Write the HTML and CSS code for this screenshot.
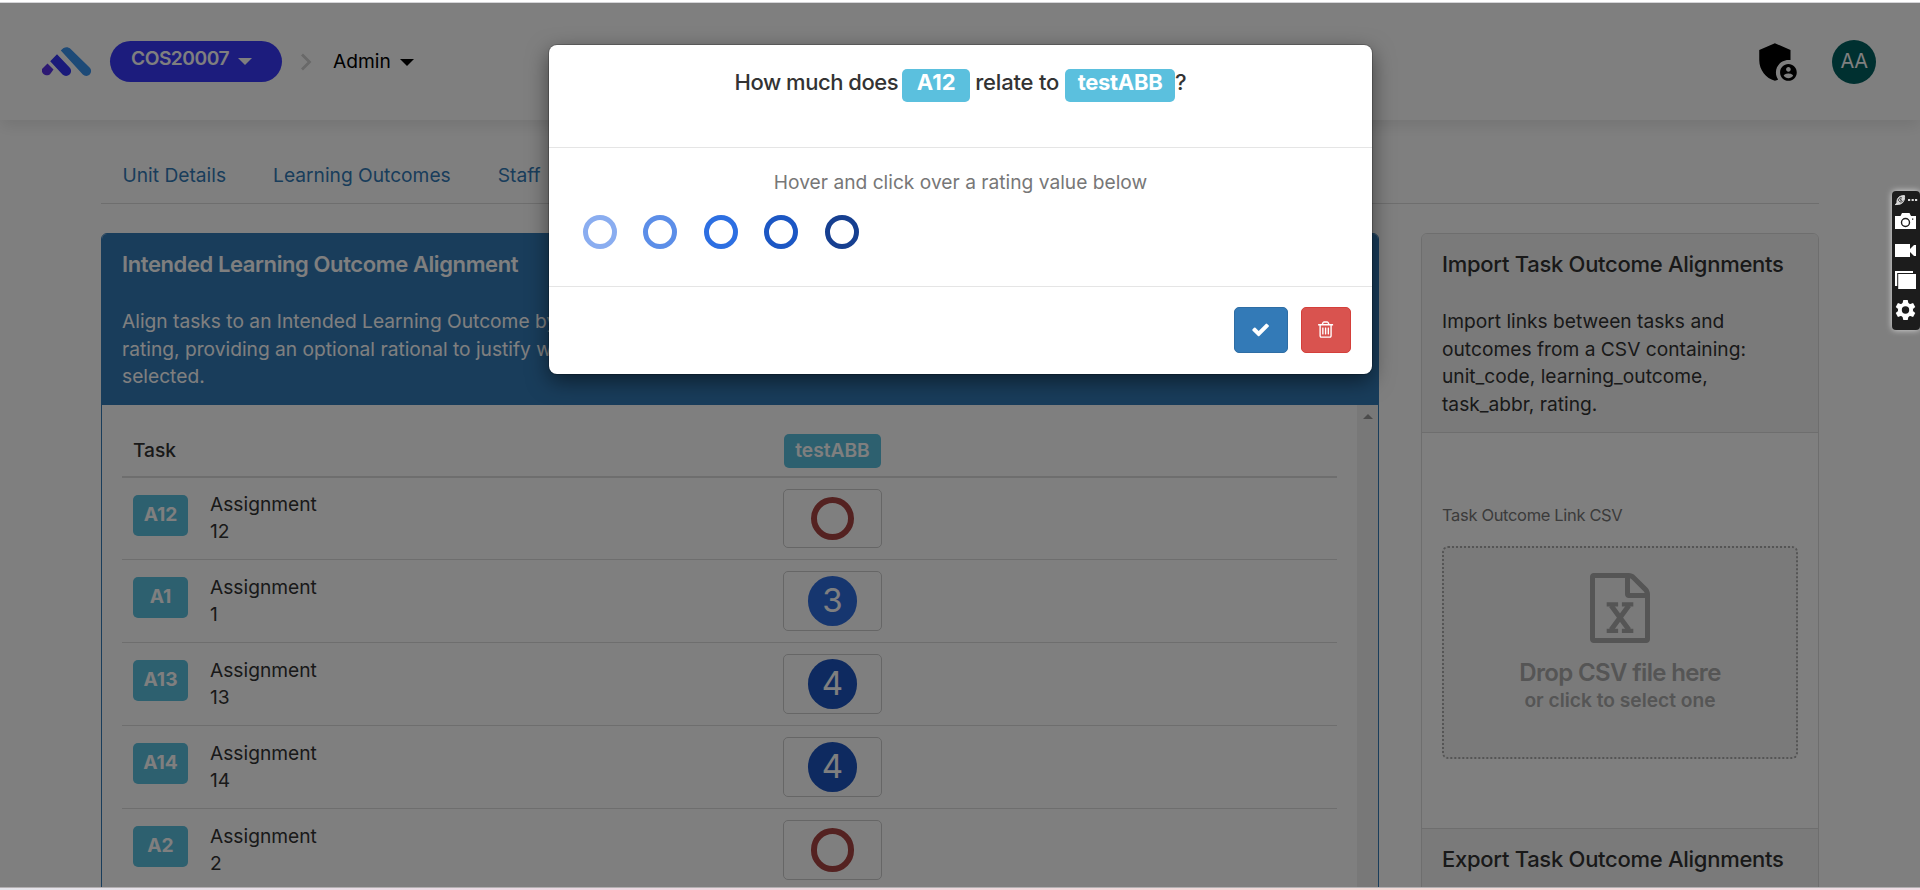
FILE: index.html
```
<!DOCTYPE html>
<html lang="en">
<head>
<meta charset="utf-8">
<title>Unit Admin</title>
<link rel="stylesheet" href="styles.css">
</head>
<body>
<div class="app">
  <header class="header">
    <svg class="logo" viewBox="0 0 50 30" width="50" height="30">
      <path d="M5.500 16.500 L11.500 22.500 L8 27.200 A5 5 0 0 1 0 24.500 V22 Z" fill="#5a32e6"/>
      <path d="M15 7.200 L27.600 20.500 A4.900 4.900 0 0 1 20.500 27.600 L8.200 14.200 Z" fill="#3434f5"/>
      <path d="M18.800 3.600 C21.600 0 25.400 -.8 28.400 1.800 L47.600 20.500 A4.900 4.900 0 0 1 40.800 27.600 Z" fill="#3b94ee"/>
    </svg>
    <button class="unit-pill">COS20007<span class="caret"></span></button>
    <svg class="chevron" viewBox="0 0 12 18" width="12" height="18"><path d="M2 1.5 L9.5 9 L2 16.5" fill="none" stroke="#d2d2d2" stroke-width="2.8"/></svg>
    <span class="crumb">Admin<span class="caret dark"></span></span>
    <svg class="shield" viewBox="0 0 24 24" width="50" height="50"><path d="M17 11c.34 0 .67.04 1 .09V6.27L10.5 3 3 6.27v4.91c0 4.54 3.2 8.79 7.5 9.82.55-.13 1.08-.32 1.6-.55-.69-.98-1.1-2.17-1.1-3.45 0-3.31 2.69-6 6-6z"/><path d="M17 13c-2.21 0-4 1.79-4 4s1.79 4 4 4 4-1.79 4-4-1.79-4-4-4zm0 1.38c.62 0 1.12.51 1.12 1.12s-.51 1.12-1.12 1.12-1.12-.51-1.12-1.12.5-1.12 1.12-1.12zm0 5.37c-.93 0-1.74-.46-2.24-1.17.05-.72 1.51-1.08 2.24-1.08s2.19.36 2.24 1.08c-.5.71-1.31 1.17-2.24 1.17z"/></svg>
    <span class="avatar">AA</span>
  </header>
  <main class="content">
    <nav class="tabs"><a>Unit Details</a><a>Learning Outcomes</a><a>Staff</a></nav>
    <div class="columns">
      <section class="panel primary">
        <div class="panel-head">
          <h4>Intended Learning Outcome Alignment</h4>
          <p>Align tasks to an Intended Learning Outcome by<br>rating, providing an optional rational to justify why<br>selected.</p>
        </div>
        <div class="scroll-area">
          <div class="table">
            <div class="row head"><span class="task-head">Task</span><span class="badge outcome">testABB</span></div>
            <div class="row first"><span class="badge">A12</span><span class="name">Assignment 12</span><span class="cell"><i class="ring"></i></span></div>
            <div class="row"><span class="badge">A1</span><span class="name">Assignment<br>1</span><span class="cell"><i class="dot three">3</i></span></div>
            <div class="row"><span class="badge">A13</span><span class="name">Assignment 13</span><span class="cell"><i class="dot four">4</i></span></div>
            <div class="row"><span class="badge">A14</span><span class="name">Assignment 14</span><span class="cell"><i class="dot four">4</i></span></div>
            <div class="row"><span class="badge">A2</span><span class="name">Assignment<br>2</span><span class="cell"><i class="ring"></i></span></div>
          </div>
          <div class="scrollbar"><span class="arrow-up"></span></div>
        </div>
      </section>
      <section class="panel side">
        <div class="panel-head">
          <h4>Import Task Outcome Alignments</h4>
          <p>Import links between tasks and<br>outcomes from a CSV containing:<br>unit_code, learning_outcome,<br>task_abbr, rating.</p>
        </div>
        <div class="upload">
          <label>Task Outcome Link CSV</label>
          <div class="dropzone">
            <svg viewBox="0 0 1536 1792" width="60" height="70" fill="#aaa"><path d="M1468 380q28 28 48 76t20 88v1152q0 40-28 68t-68 28H96q-40 0-68-28t-28-68V96q0-40 28-68T96 0h896q40 0 88 20t76 48zM1024 136v376h376q-10-29-22-41l-313-313q-12-12-41-22zM1408 1664V640H992q-40 0-68-28t-28-68V128H128v1536h1280z"/><path d="M540 830 L996 1452 M996 830 L540 1452" fill="none" stroke="#aaa" stroke-width="128"/><path d="M427 750h293v106H427zM816 750h293v106H816zM427 1427h293v106H427zM816 1427h293v106H816z"/></svg>
            <strong>Drop CSV file here</strong>
            <small>or click to select one</small>
          </div>
        </div>
        <div class="panel-head export"><h4>Export Task Outcome Alignments</h4></div>
      </section>
    </div>
  </main>
</div>
<div class="backdrop"></div>
<div class="modal">
  <div class="modal-head"><span class="lead">How much does</span><span class="tag">A12</span><span>relate to</span><span class="tag wide">testABB</span><span>?</span></div>
  <div class="modal-body">
    <p>Hover and click over a rating value below</p>
    <div class="ratings"><i class="r1"></i><i class="r2"></i><i class="r3"></i><i class="r4"></i><i class="r5"></i></div>
  </div>
  <div class="modal-foot">
    <button class="btn save"><svg viewBox="0 0 1792 1792" width="19.2" height="19.2" fill="#fff"><path d="M1671 566q0 40-28 68l-724 724-136 136q-28 28-68 28t-68-28l-136-136-362-362q-28-28-28-68t28-68l136-136q28-28 68-28t68 28l294 295 656-657q28-28 68-28t68 28l136 136q28 28 28 68z"/></svg></button>
    <button class="btn delete"><svg viewBox="0 0 1792 1792" width="19.2" height="19.2" fill="#fff"><path d="M704 736v576q0 14-9 23t-23 9h-64q-14 0-23-9t-9-23v-576q0-14 9-23t23-9h64q14 0 23 9t9 23zm256 0v576q0 14-9 23t-23 9h-64q-14 0-23-9t-9-23v-576q0-14 9-23t23-9h64q14 0 23 9t9 23zm256 0v576q0 14-9 23t-23 9h-64q-14 0-23-9t-9-23v-576q0-14 9-23t23-9h64q14 0 23 9t9 23zm128 724v-948h-896v948q0 22 7 40.5t14.5 27 10.5 8.5h832q3 0 10.5-8.5t14.5-27 7-40.5zm-672-1076h448l-48-117q-7-9-17-11h-317q-10 2-17 11zm928 32v64q0 14-9 23t-23 9h-96v948q0 83-47 143.5t-113 60.5h-832q-66 0-113-58.5t-47-141.5v-952h-96q-14 0-23-9t-9-23v-64q0-14 9-23t23-9h309l70-167q15-37 54-63t79-26h320q40 0 79 26t54 63l70 167h309q14 0 23 9t9 23z"/></svg></button>
  </div>
</div>
<div class="recorder">
  <svg viewBox="0 0 28 139" width="28" height="139">
    <path d="M5 12 C4.500 7 7.500 4.500 12.500 4.600 C13 9.500 11 13 6.500 13.400 L3.200 13.600 Z" fill="#d8d8d8" stroke="#d8d8d8"/>
    <path d="M10 7 A2.200 2.200 0 1 0 10.800 9.800 M8.600 7.600 V9.300 H10" fill="none" stroke="#1c1c1c" stroke-width=".8"/>
    <path d="M16 8h2.200v2H16zM19.600 8h2.200v2h-2.200zM23 8h2.200v2H23z" fill="#ddd"/>
    <path d="M3 25h5.500l1.500-3h7.500l1.500 3H24v13H3z" fill="#fff"/>
    <circle cx="13.500" cy="31.500" r="4" fill="none" stroke="#1c1c1c" stroke-width="1.400"/>
    <path d="M20 27.500h1.300v1.300H20z" fill="#1c1c1c"/>
    <path d="M3 53h15v5l4-4h2v11h-2l-4-4v5H3z" fill="#fff"/>
    <path d="M3 80h18v2H5.200v13H3z" fill="#fff"/>
    <path d="M6.200 83H24v15H6.200z" fill="#fff"/>
    <g fill="#fff" transform="translate(13.500 119)"><circle r="7.600"/><path d="M-3-6.500L-2.200-10h4.400L3-6.500z"/><path d="M-3-6.500L-2.200-10h4.400L3-6.500z" transform="rotate(60)"/><path d="M-3-6.500L-2.200-10h4.400L3-6.500z" transform="rotate(120)"/><path d="M-3-6.500L-2.200-10h4.400L3-6.500z" transform="rotate(180)"/><path d="M-3-6.500L-2.200-10h4.400L3-6.500z" transform="rotate(240)"/><path d="M-3-6.500L-2.200-10h4.400L3-6.500z" transform="rotate(300)"/></g>
    <circle cx="13.500" cy="119" r="3.700" fill="#1c1c1c"/>
  </svg>
</div>
<div class="edge-top"></div>
<div class="edge-bottom"></div>
</body>
</html>
```
FILE: styles.css
```
* { box-sizing: border-box; }
body { margin: 0; height: 890px; overflow: hidden; background: #fff; color: #333; font: 400 19.2px/27.5px Inter, "Open Sans", sans-serif; }
button { font: inherit; border: 0; padding: 0; }
h4, p { margin: 0; font-weight: inherit; }
i { font-style: normal; }
svg { flex: none; display: block; }

.app { height: 890px; padding-top: 3px; overflow: hidden; }

.header { height: 117px; padding: 0 44px 0 42px; display: flex; align-items: center; color: #000; box-shadow: 0 7px 14px -1px rgba(0, 0, 0, .09); }
.unit-pill { width: 172px; height: 41px; margin-left: 18px; padding: 0 0 5.500px 21px; border-radius: 20.500px; display: flex; align-items: center; background: #3838fa; color: #fff; font-weight: 600; letter-spacing: -.5px; }
.caret { border: 7px solid transparent; border-top-color: currentColor; border-bottom: 0; margin: 6px 0 0 9.500px; }
.caret.dark { margin: 1px 0 0 9px; }
.chevron { margin-left: 18px; }
.crumb { margin-left: 21px; display: flex; align-items: center; }
.shield { margin-left: auto; }
.avatar { width: 44px; height: 44px; margin-left: 29px; border-radius: 50%; display: flex; align-items: center; justify-content: center; background: #006060; color: #fff; font-size: 20px; letter-spacing: -.5px; }

.content { width: 1718px; margin-left: 101px; }
.tabs { height: 84px; margin-bottom: 29px; padding: 42px 0 0 21.500px; display: flex; gap: 47px; border-bottom: 1px solid #ddd; color: #337ab7; }

.columns { display: grid; grid-template-columns: 1278px 398px; gap: 42px; align-items: start; }
.panel { height: 700px; border: 1px solid #ddd; border-radius: 6px; overflow: hidden; }
.panel.primary { border-color: #337ab7; }
.panel-head { height: 199px; padding: 18px 20px 0; background: #f5f5f5; border-bottom: 1px solid #ddd; }
.panel-head h4 { font-size: 22px; line-height: 24px; font-weight: 500; letter-spacing: -.28px; margin-bottom: 32.300px; }
.primary .panel-head { height: 171px; background: #337ab7; border: 0; color: #fff; }
.primary .panel-head h4 { font-weight: 600; letter-spacing: -.4px; }

.scroll-area { height: 528px; display: flex; justify-content: space-between; }
.table { width: 1215px; margin-left: 20px; }
.row { height: 83px; display: grid; grid-template-columns: 55px 120px 99px; column-gap: 22px; padding: 11px 11px 0; border-bottom: 1px solid #ddd; align-items: start; }
.row.first { height: 82px; }
.row.head { height: 73px; border-bottom-width: 2px; grid-template-columns: 651px 97px; column-gap: 0; padding-top: 29px; }
.task-head { font-weight: 500; line-height: 33px; }
.badge { height: 40.500px; margin-top: 6px; border-radius: 5px; display: flex; align-items: center; justify-content: center; background: #5bc0de; color: #fff; font-weight: 700; padding-bottom: 1px; }
.badge.outcome { height: 34px; margin: 0; padding-bottom: 0; font-weight: 600; }
.name { line-height: 27px; padding-top: 2.500px; width: 115px; }
.first .name { padding-top: 2px; }
.cell { width: 99px; height: 60px; margin-left: 431px; border: 1px solid #ccc; border-radius: 5px; display: flex; align-items: center; justify-content: center; }
.first .cell { height: 59px; }
.ring { width: 43.500px; height: 43.500px; border: 6.500px solid #a94442; border-radius: 50%; }
.dot { width: 49.500px; height: 49.500px; border-radius: 50%; display: flex; align-items: center; justify-content: center; color: #fff; font-size: 33px; padding-bottom: 1px; }
.three { background: #2d6cdf; }
.four { background: #1c54c0; }
.scrollbar { width: 21px; background: #f1f1f1; display: flex; justify-content: center; padding-top: 9px; }
.arrow-up { height: 5px; border: 5px solid transparent; border-bottom-color: #999; border-top: 0; }

.upload { height: 395px; padding: 69px 20px 0; }
.upload label { display: block; font-size: 16.500px; letter-spacing: -.34px; color: #777; }
.dropzone { width: 356px; height: 213px; margin-top: 16px; padding-top: 25.500px; border: 2px dotted #aaa; border-radius: 6px; display: flex; flex-direction: column; align-items: center; background: #f5f5f5; color: #aaa; }
.dropzone strong { margin-top: 15px; font-size: 24px; line-height: 30px; font-weight: 600; letter-spacing: -.65px; }
.dropzone small { font-size: 19.200px; line-height: 25px; font-weight: 600; }
.export { border-top: 1px solid #ddd; }

.backdrop { position: absolute; inset: 3px 0 3px; background: rgba(0, 0, 0, .5); }

.modal { position: absolute; left: 549px; top: 45px; width: 823px; height: 329px; background: #fff; border-radius: 8px; box-shadow: 0 0 0 1px rgba(0, 0, 0, .2), 0 7px 21px rgba(0, 0, 0, .5); }
.modal-head { height: 103px; padding-top: 21px; border-bottom: 1px solid #e5e5e5; display: flex; justify-content: center; font-size: 22px; line-height: 32px; font-weight: 500; letter-spacing: -.2px; }
.lead { letter-spacing: -.46px; }
.tag { width: 68px; height: 33px; margin: 3px 5px 0 4px; border-radius: 5px; background: #5bc0de; color: #fff; font-weight: 700; line-height: 27px; letter-spacing: 0; text-align: center; }
.tag.wide { width: 110px; margin-right: 0; margin-left: 6px; letter-spacing: -.3px; }
.modal-body { height: 139px; padding: 21px 34px 0; border-bottom: 1px solid #e5e5e5; text-align: center; color: #777; }
.ratings { display: flex; gap: 26.400px; margin-top: 18px; }
.ratings i { width: 34px; height: 34px; border: 5px solid; border-radius: 50%; }
.r1 { color: #8aadf0; }
.r2 { color: #5c8ee8; }
.r3 { color: #2d6fe2; }
.r4 { color: #1c57c4; }
.r5 { color: #163f90; }
.modal-foot { display: flex; justify-content: flex-end; gap: 13px; padding: 20px 21px 0; }
.btn { width: 54px; height: 46px; border-radius: 5px; display: flex; align-items: center; justify-content: center; border: 1px solid #2e6da4; background: #337ab7; }
.btn.delete { width: 50px; background: #d9534f; border-color: #d43f3a; }

.recorder { position: absolute; left: 1892px; top: 191px; width: 28px; height: 139px; border-radius: 4px; background: #1c1c1c; box-shadow: 0 0 6px rgba(255, 255, 255, .75); }
.edge-top { position: absolute; inset: 0 0 auto; height: 3px; background: #fff; border-bottom: 1px solid #d5d5d8; }
.edge-bottom { position: absolute; inset: auto 0 0; height: 3px; border-top: 1px solid #b3b0b2; background: linear-gradient(90deg, #e4e4ea, #ecd8e2 30%, #f3d9d6 75%, #f0dee6); }
```
